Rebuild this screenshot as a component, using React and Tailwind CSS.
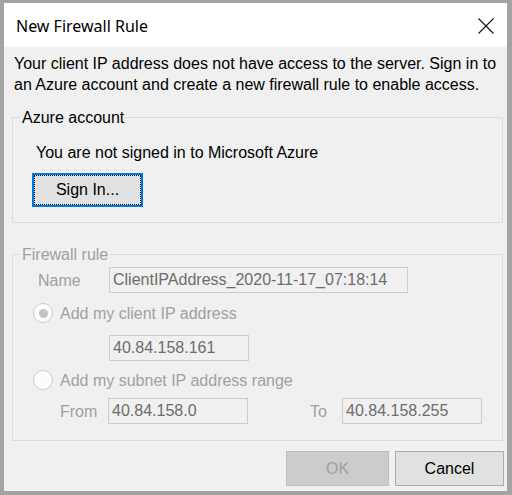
import React from 'react';

const body = { fontFamily: '"Liberation Sans", Arial, sans-serif' };

function Field({ value, className = '' }) {
  return (
    <div className={`h-[26px] border border-[#cccccc] bg-[#f0f0f0] pl-[3px] text-[16px] leading-[24px] text-[#6d6d6d] ${className}`}>
      {value}
    </div>
  );
}

function Radio({ checked, label }) {
  return (
    <div className="flex items-center gap-[7px] h-[22px]">
      <span className="w-[20px] h-[20px] rounded-full border border-[#cccccc] bg-[#fcfcfc] flex items-center justify-center">
        {checked && <span className="w-[9px] h-[9px] rounded-full bg-[#c4c4c4]" />}
      </span>
      <span className="text-[#a0a0a0]">{label}</span>
    </div>
  );
}

function App() {
  return (
    <div className="w-[512px] h-[495px] bg-[#a3a3a3] pt-[3px] pl-[4px] pr-[5px] pb-[4px]">
      <div className="h-full flex flex-col">
        {/* title bar */}
        <div className="h-[44px] bg-white flex items-center justify-between pl-[12px] pr-[13px]">
          <span className="text-[16px] text-black pt-[1px]" style={{ fontFamily: '"Noto Sans", "Open Sans", sans-serif' }}>
            New Firewall Rule
          </span>
          <svg width="16" height="16" viewBox="0 0 16 16" className="mt-[2px]">
            <path d="M0.5 0.5 L15.5 15.5 M15.5 0.5 L0.5 15.5" stroke="#111" strokeWidth="1.1" fill="none" />
          </svg>
        </div>

        {/* body */}
        <div className="flex-1 bg-[#f0f0f0] flex flex-col text-[16px] leading-[21px] text-black" style={body}>
          <p className="pl-[10px] pr-[6px] pt-[6px]">
            Your client IP address does not have access to the server. Sign in to an Azure account and create a new firewall rule to enable access.
          </p>

          <fieldset className="ml-[8px] mr-[4px] mt-[12px] border border-[#dcdcdc] pb-[15px]">
            <legend className="ml-[7px] px-[2px] leading-[20px]">
              <span className="relative top-[1px]">Azure account</span>
            </legend>
            <div className="pl-[19px]">
              <p className="ml-[4px] mt-[15px]">You are not signed in to Microsoft Azure</p>
              <button className="mt-[10px] w-[111px] h-[34px] border-2 border-[#0078d7] bg-[#e1e1e1] p-0">
                <span className="block h-full border border-dotted border-black leading-[28px] text-black">Sign In...</span>
              </button>
            </div>
          </fieldset>

          <fieldset className="ml-[8px] mr-[4px] mt-[21px] border border-[#dcdcdc] pb-[16px]">
            <legend className="ml-[7px] px-[2px] leading-[20px] text-[#a0a0a0]">
              <span className="relative top-[1px]">Firewall rule</span>
            </legend>
            <div className="flex items-center mt-[3px]">
              <span className="w-[96px] pl-[25px] text-[#a0a0a0]">Name</span>
              <Field value="ClientIPAddress_2020-11-17_07:18:14" className="w-[299px]" />
            </div>
            <div className="ml-[20px] mt-[9px]">
              <Radio checked label="Add my client IP address" />
            </div>
            <div className="ml-[96px] mt-[11px]">
              <Field value="40.84.158.161" className="w-[140px]" />
            </div>
            <div className="ml-[20px] mt-[8px]">
              <Radio label="Add my subnet IP address range" />
            </div>
            <div className="flex items-center mt-[7px]">
              <span className="w-[95px] pl-[47px] text-[#a0a0a0]">From</span>
              <Field value="40.84.158.0" className="w-[140px]" />
              <span className="w-[94px] pl-[62px] text-[#a0a0a0]">To</span>
              <Field value="40.84.158.255" className="w-[140px]" />
            </div>
          </fieldset>

          <div className="flex justify-end gap-[6px] mt-[10px] pr-[3px]">
            <button className="w-[103px] h-[35px] border border-[#bfbfbf] bg-[#cccccc] text-[#a0a0a0]">OK</button>
            <button className="w-[109px] h-[35px] border border-[#adadad] bg-[#e1e1e1] text-black">Cancel</button>
          </div>
        </div>
      </div>
    </div>
  );
}

export default App;
